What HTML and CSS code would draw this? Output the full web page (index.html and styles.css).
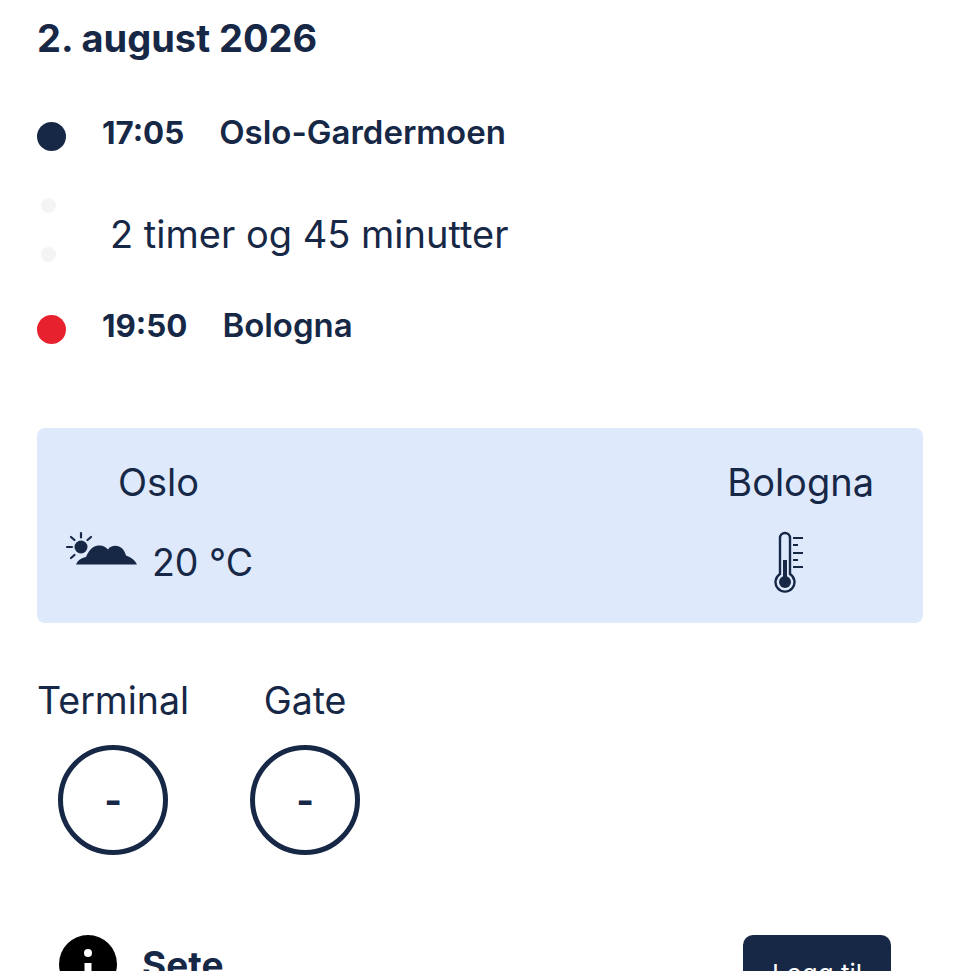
FILE: index.html
```html
<!DOCTYPE html>
<html lang="en">
<head>
    <meta charset="UTF-8">
    <meta name="viewport" content="width=device-width, initial-scale=1.0">
    <title>Flyreise</title>
    <link rel="stylesheet" href="styles.css">
</head>
<body>
    <div class="page">
        <h2 class="date">2. august 2026</h2>

        <div class="route">
            <div class="stop">
                <span class="dot dot-from"></span>
                <span class="time">17:05</span>
                <span class="place">Oslo-Gardermoen</span>
            </div>
            <div class="duration">
                <div class="dots">
                    <span class="small-dot"></span>
                    <span class="small-dot"></span>
                </div>
                <span class="duration-text">2 timer og 45 minutter</span>
            </div>
            <div class="stop">
                <span class="dot dot-to"></span>
                <span class="time">19:50</span>
                <span class="place">Bologna</span>
            </div>
        </div>

        <div class="weather">
            <div class="weather-from">
                <div class="city">Oslo</div>
                <div class="weather-row">
                    <svg class="cloud-icon" width="73" height="36" viewBox="0 0 73 36">
                        <g fill="#172847">
                            <circle cx="16" cy="17" r="6.5"/>
                            <path d="M11 34.500 C13 30 16 28 21 27 C23 22 27 16 33 15.500 C38 15 41 17 43 19.500 C45 16 50 15 54 16.500 C58 18 60 22 61 25.500 C66 27 70 30 72 34.500 Z"/>
                        </g>
                        <g stroke="#172847" stroke-width="2.200" stroke-linecap="round">
                            <path d="M16 3 V7.500"/>
                            <path d="M6 7 L9.500 10"/>
                            <path d="M26 7 L22.500 10"/>
                            <path d="M2 17 H7"/>
                            <path d="M6 28 L9.500 25"/>
                        </g>
                    </svg>
                    <span class="temp">20 °C</span>
                </div>
            </div>
            <div class="weather-to">
                <div class="city">Bologna</div>
                <svg class="thermo-icon" width="30" height="62" viewBox="0 0 30 62">
                    <path d="M6 43 V7 A5 5 0 0 1 16 7 V43 A9.500 9.500 0 1 1 6 43 Z" fill="none" stroke="#172847" stroke-width="2.400"/>
                    <circle cx="11" cy="51" r="6" fill="#172847"/>
                    <path d="M11 51 V29" stroke="#172847" stroke-width="4"/>
                    <g stroke="#172847" stroke-width="2">
                        <path d="M19 7 H29"/>
                        <path d="M19 14 H24"/>
                        <path d="M19 22 H29"/>
                        <path d="M19 29 H24"/>
                        <path d="M19 36 H29"/>
                    </g>
                </svg>
            </div>
        </div>

        <div class="gates">
            <div class="gate gate-terminal">
                <div class="gate-label">Terminal</div>
                <div class="gate-circle">-</div>
            </div>
            <div class="gate gate-gate">
                <div class="gate-label">Gate</div>
                <div class="gate-circle">-</div>
            </div>
        </div>

        <div class="seat">
            <div class="seat-left">
                <svg class="info-icon" width="58" height="58" viewBox="0 0 58 58">
                    <circle cx="29" cy="29" r="29" fill="#000"/>
                    <circle cx="29" cy="18" r="4" fill="#fff"/>
                    <rect x="25.500" y="28" width="7" height="18" fill="#fff"/>
                </svg>
                <span class="seat-title">Sete</span>
            </div>
            <button class="add-btn">Legg til</button>
        </div>
    </div>
</body>
</html>
```

FILE: styles.css
```css
html, body {
    margin: 0;
    height: 971px;
    overflow: hidden;
}

body {
    font-family: Inter, "Noto Sans", sans-serif;
    color: #172847;
    background-color: white;
}

.page {
    padding: 12px 37px 0;
}

.date {
    margin: 0;
    font-size: 38px;
    line-height: 52px;
    font-weight: 700;
}

.route {
    margin-top: 43px;
}

.stop {
    display: flex;
    align-items: center;
    height: 52px;
    font-weight: 700;
}

.dot {
    width: 29px;
    height: 29px;
    border-radius: 50%;
    margin-right: 36px;
    margin-top: 6px;
}

.dot-from {
    background-color: #172847;
}

.dot-to {
    background-color: #e8212e;
}

.time {
    font-size: 31.300px;
}

.place {
    margin: 0 0 2px 35px;
    font-size: 33px;
    font-weight: 600;
}

.duration {
    display: flex;
    align-items: center;
    height: 141px;
}

.dots {
    display: flex;
    flex-direction: column;
    gap: 34px;
    margin-left: 4px;
    width: 69px;
}

.small-dot {
    width: 15px;
    height: 15px;
    border-radius: 50%;
    background-color: #f4f4f4;
}

.duration-text {
    margin-top: 8px;
    font-size: 38px;
    font-weight: 400;
}

.weather {
    display: flex;
    justify-content: space-between;
    margin-top: 76px;
    height: 195px;
    background-color: #dee9fc;
    border-radius: 8px;
    box-sizing: border-box;
    padding: 30px 49px 0 28px;
}

.city {
    font-size: 38px;
    line-height: 48px;
}

.weather-from .city {
    margin-left: 53px;
}

.weather-row {
    display: flex;
    align-items: flex-start;
    margin-top: 24px;
}

.temp {
    font-size: 37.500px;
    line-height: 46px;
    margin: 10px 0 0 14px;
}

.thermo-icon {
    display: block;
    margin: 25px 0 0 47px;
}

.gates {
    display: flex;
    margin-top: 55px;
}

.gate {
    display: flex;
    flex-direction: column;
    align-items: center;
}

.gate-gate {
    margin-left: 61px;
}

.gate-label {
    font-size: 37.500px;
    line-height: 46px;
}

.gate-circle {
    display: flex;
    align-items: center;
    justify-content: center;
    box-sizing: border-box;
    width: 110px;
    height: 110px;
    margin-top: 21px;
    border: 5px solid #172847;
    border-radius: 50%;
    font-size: 38px;
    font-weight: 700;
}

.seat {
    display: flex;
    justify-content: space-between;
    margin-top: 80px;
    padding: 0 32px 0 22px;
}

.seat-left {
    display: flex;
    align-items: flex-start;
}

.seat-title {
    margin: 7px 0 0 25px;
    font-size: 37px;
    font-weight: 700;
}

.add-btn {
    width: 148px;
    height: 76px;
    padding: 0;
    border: none;
    border-radius: 10px;
    background-color: #172847;
    color: white;
    font-family: inherit;
    font-size: 26px;
}
```
